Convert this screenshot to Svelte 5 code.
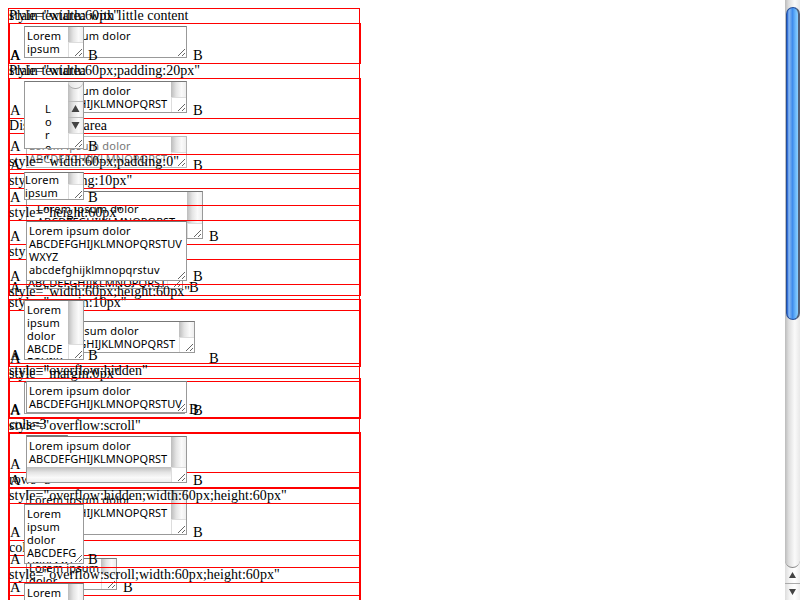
<script>
  const FULL = ['Lorem ipsum dolor', 'ABCDEFGHIJKLMNOPQRST', 'UVWXYZ'];
  const WIDE = ['Lorem ipsum dolor', 'ABCDEFGHIJKLMNOPQRSTUV', 'WXYZ', 'abcdefghijklmnopqrstuv'];
  const SMALL = ['Lorem', 'ipsum', 'dolor', 'ABCDE', 'FGHIJK'];

  // h: row height, x/t: box offset, w/bh: box size, base: baseline of the A and B labels
  const back = [
    { title: 'Plain textarea with little content', h: 40, x: 26, t: 3, w: 161, bh: 32, base: 37, b: 193, lines: ['Lorem ipsum dolor'] },
    { title: 'Plain textarea', h: 40, x: 26, t: 3, w: 161, bh: 32, base: 37, b: 193, lines: FULL, v: true },
    { title: 'Disabled textarea', h: 40, x: 26, t: 3, w: 161, bh: 32, base: 37, b: 193, lines: FULL, v: true, disabled: true },
    { title: 'style="padding:10px"', h: 56, x: 26, t: 3, w: 177, bh: 48, base: 53, b: 209, lines: FULL, v: true, px: 10, py: 10 },
    { title: 'style="padding:0"', h: 36, x: 26, t: 3, w: 157, bh: 27, base: 33, b: 189, lines: FULL, v: true, px: 1, py: 0 },
    { title: 'style="margin:10px"', h: 56, x: 34, t: 11, w: 161, bh: 32, base: 53, b: 209, lines: FULL, v: true },
    { title: 'style="margin:0px"', h: 36, x: 24, t: 1, w: 161, bh: 32, base: 33, b: 189, lines: FULL, v: true },
    { title: 'cols=3', h: 40, x: 26, t: 3, w: 42, bh: 32, base: 37, b: 74, lines: ['Lor', 'em'], v: true },
    { title: 'rows=3', h: 53, x: 26, t: 3, w: 161, bh: 45, base: 50, b: 193, lines: FULL, v: true },
    { title: 'cols=10', h: 40, x: 26, t: 3, w: 91, bh: 32, base: 37, b: 123, lines: ['Lorem ipsum', 'dolor'], v: true }
  ];
  const front = [
    { title: 'style="width:60px"', h: 40, x: 24, t: 3, w: 60, bh: 32, base: 37, b: 88, lines: SMALL, v: true },
    { title: 'style="width:60px;padding:20px"', h: 76, x: 24, t: 3, w: 60, bh: 68, base: 73, b: 88, lines: ['L', 'o', 'r', 'e'], v: true, px: 20, py: 20, arrows: true },
    { title: 'style="width:60px;padding:0"', h: 36, x: 24, t: 3, w: 60, bh: 28, base: 33, b: 88, lines: SMALL, v: true, px: 0, py: 0 },
    { title: 'style="height:60px"', h: 64, x: 26, t: 1, w: 161, bh: 60, base: 61, b: 193, lines: WIDE },
    { title: 'style="width:60px;height:60px"', h: 64, x: 24, t: 1, w: 60, bh: 60, base: 61, b: 88, lines: SMALL, v: true },
    { title: 'style="overflow:hidden"', h: 40, x: 26, t: 3, w: 161, bh: 32, base: 37, b: 193, lines: WIDE },
    { title: 'style="overflow:scroll"', h: 55, x: 26, t: 3, w: 161, bh: 47, base: 52, b: 193, lines: FULL.slice(0, 2), v: true, hbar: true },
    { title: 'style="overflow:hidden;width:60px;height:60px"', h: 64, x: 24, t: 1, w: 60, bh: 60, base: 61, b: 88, lines: ['Lorem', 'ipsum', 'dolor', 'ABCDEFG', 'HIJKLMN'] },
    { title: 'style="overflow:scroll;width:60px;height:60px"', h: 64, x: 24, t: 1, w: 60, bh: 60, base: 61, b: 88, lines: SMALL.slice(0, 3), v: true, hbar: true }
  ];
  const layers = [back, front];
  const kind = (s) => (s.length < 2 ? '' : s === s.toUpperCase() ? 'caps' : 'lower');
</script>

<div class="page">
  {#each layers as rows}
    <div class="layer">
      {#each rows as r}
        <div class="title"><span>{r.title}</span></div>
        <div class="row" style="height:{r.h + 1}px">
          <span class="label" style="width:{r.x - 10}px;padding-top:{r.base - 13}px">A</span>
          <div class="area" class:disabled={r.disabled} style="margin-top:{r.t - 1}px;width:{r.w}px;height:{r.bh}px">
            <div class="text" style="padding:{r.py ?? 2}px 0 0 {r.px ?? 2}px">
              {#each r.lines as l}<div class={kind(l)}>{l}</div>{/each}
            </div>
            {#if r.v}
              <div class="side">
                <div class="vbar">
                  {#if r.arrows}
                    <i class="cap"></i>
                    <svg width="15" height="32" viewBox="0 0 15 32"><path d="M0 .5H15M0 16.500H15" stroke="#bbb" /><path d="M3.500 11H11.500L7.500 4Z M3.500 21H11.500L7.500 28Z" fill="#444" /></svg>
                  {/if}
                </div>
                <div class="corner"></div>
              </div>
            {/if}
            {#if r.hbar}<div class="hbar"></div>{/if}
            <svg class="grip" width="9" height="9" viewBox="0 0 9 9"><path d="M1 8L8 1M5 8L8 5" stroke="#555" stroke-width=".9" fill="none" /></svg>
          </div>
          <span class="label" style="margin-left:{r.b - r.x - r.w}px;padding-top:{r.base - 13}px">B</span>
        </div>
      {/each}
    </div>
  {/each}

  <div class="scrollbar">
    <div class="track"><div class="thumb"></div></div>
    <svg width="15" height="32" viewBox="0 0 15 32"><path d="M0 15.500H15" stroke="#aaa" /><path d="M4 10H11L7.500 4Z M4 21H11L7.500 27Z" fill="#444" /></svg>
  </div>
</div>

<style>
  :global(body) { margin: 0; background: #fff; overflow: hidden; }
  .page { position: relative; width: 800px; height: 600px; overflow: hidden; display: flex; justify-content: flex-end; }
  .layer { position: absolute; left: 8px; top: 8px; width: 353px; font: 14px/15px "Liberation Serif", "Times New Roman", serif; color: #000; }
  .title { box-sizing: border-box; width: 352px; height: 16px; border: 1px solid red; margin-bottom: -1px; white-space: nowrap; line-height: 14px; letter-spacing: 0.02px; }
  .row { box-sizing: border-box; width: 353px; border: solid red; border-width: 1px 2px; margin-bottom: -1px; display: flex; align-items: flex-start; }
  .label { flex: none; display: block; height: 15px; font-size: 14.5px; }
  .area { position: relative; flex: none; box-sizing: border-box; display: flex; background: #fff; border: 1px solid #999; border-top-color: #777; overflow: hidden; font: 11px/13px "Noto Sans", "Open Sans", sans-serif; }
  .text { flex: 1; min-width: 0; box-sizing: border-box; height: 100%; overflow: hidden; white-space: nowrap; }
  .lower { letter-spacing: 0.2px; }
  .caps { letter-spacing: 0.03px; }
  .disabled { color: #777; border-color: #bbb; }
  .side { flex: none; width: 15px; display: flex; flex-direction: column; }
  .vbar { flex: 1; background: linear-gradient(90deg, #bcbcbc, #e4e4e4 35%, #fafafa 70%, #eee); display: flex; flex-direction: column; }
  .cap { display: block; height: 6px; margin-bottom: 12px; border-bottom: 1px solid #aaa; border-radius: 0 0 7px 7px; background: #f2f2f2aa; }
  .corner { box-sizing: border-box; height: 15px; border: solid #ddd; border-width: 1px 0 0 1px; background: #fff; }
  .hbar { position: absolute; left: 0; right: 15px; bottom: 0; height: 15px; background: linear-gradient(#bcbcbc, #e4e4e4 35%, #fafafa 70%, #eee); }
  .grip { position: absolute; right: 0; bottom: 0; }
  .scrollbar { width: 15px; height: 600px; display: flex; flex-direction: column; background: linear-gradient(90deg, #ddd, #f4f4f4 30%, #fff 65%, #eee); }
  .track { box-sizing: border-box; height: 568px; padding: 7px 0 0 1px; border-bottom: 1px solid #888; border-radius: 0 0 8px 8px; background: linear-gradient(90deg, #bbb, #dedede 25%, #fafafa 65%, #e8e8e8); }
  .thumb { box-sizing: border-box; width: 14px; height: 313px; border: 1px solid #244e99; border-right: 2px solid #526078; border-radius: 7px; background: linear-gradient(90deg, #1555cc, #8ebcf4 18%, #65a4ef 34%, #3f8cec 50%, #67b5fb 75%, #8bd0ff); }
</style>
